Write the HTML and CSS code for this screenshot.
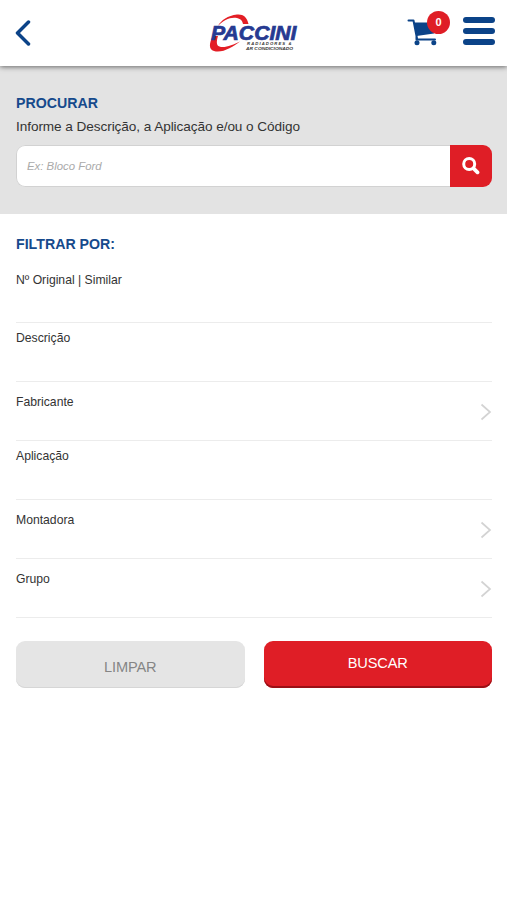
FILE: index.html
```html
<!DOCTYPE html>
<html lang="pt-BR">
<head>
<meta charset="utf-8">
<title>Paccini</title>
<link rel="stylesheet" href="styles.css">
</head>
<body>
<header class="topbar">
  <a class="back" aria-label="Voltar"><svg width="16" height="26" viewBox="0 0 16 26"><path d="M13.5 2 2.500 13l11 11" fill="none" stroke="#0b4388" stroke-width="3.500" stroke-linecap="round" stroke-linejoin="round"/></svg></a>
  <svg class="logo" width="110" height="60" viewBox="0 0 110 60">
    <path d="M48.500 19C47 12 43 9 37 9.600 28 10.500 21 15.500 18 21 23 15 31 11.500 37 13c4 1 5.500 3 6 6z" fill="#e31e25"/>
    <path d="M13 31c-4 7-4.500 13.500 1 15C22 48.500 33 42 40 36.500c-7 3.500-16 7-20.500 5C16 40.500 16.500 36 18 31z" fill="#e31e25"/>
    <text class="logo-name" x="11" y="35.300" textLength="85.500" lengthAdjust="spacingAndGlyphs">PACCINI</text>
    <text class="logo-sub" x="47" y="40" textLength="44.500" lengthAdjust="spacing">RADIADORES &amp;</text>
    <text class="logo-sub" x="46" y="44.900" textLength="47" lengthAdjust="spacingAndGlyphs">AR CONDICIONADO</text>
  </svg>
  <div class="actions">
    <a class="cart" aria-label="Carrinho">
      <svg width="31" height="28" viewBox="0 0 31 28">
        <path d="M7 4.500h22L27 15.500 9.500 18z" fill="#0b4388"/>
        <path d="M1.500 2.500h5L10 20.500M9.500 17v4.500H28" fill="none" stroke="#0b4388" stroke-width="2" stroke-linecap="round" stroke-linejoin="round"/>
        <circle cx="10" cy="24.800" r="2.500" fill="#0b4388"/><circle cx="26.800" cy="24.800" r="2.500" fill="#0b4388"/>
      </svg>
      <span class="badge">0</span>
    </a>
    <a class="menu" aria-label="Menu"><i></i><i></i><i></i></a>
  </div>
</header>
<section class="search">
  <h2>PROCURAR</h2>
  <p>Informe a Descrição, a Aplicação e/ou o Código</p>
  <div class="searchbox">
    <span class="field">Ex: Bloco Ford</span>
    <span class="go"><svg width="18" height="18" viewBox="0 0 18 18"><circle cx="7.200" cy="7" r="5.500" fill="none" stroke="#fff" stroke-width="3"/><path d="m11.500 11.300 4 4" stroke="#fff" stroke-width="3.800" stroke-linecap="round"/></svg></span>
  </div>
</section>
<main class="filters">
  <h2>FILTRAR POR:</h2>
  <div class="row first">Nº Original | Similar</div>
  <div class="row">Descrição</div>
  <div class="row select">Fabricante<svg width="12" height="18" viewBox="0 0 12 18"><path d="m1.500 1.500 8.500 7.500-8.500 7.500"/></svg></div>
  <div class="row">Aplicação</div>
  <div class="row select">Montadora<svg width="12" height="18" viewBox="0 0 12 18"><path d="m1.500 1.500 8.500 7.500-8.500 7.500"/></svg></div>
  <div class="row select">Grupo<svg width="12" height="18" viewBox="0 0 12 18"><path d="m1.500 1.500 8.500 7.500-8.500 7.500"/></svg></div>
  <div class="buttons">
    <span class="btn clear">LIMPAR</span>
    <span class="btn submit">BUSCAR</span>
  </div>
</main>
</body>
</html>
```
FILE: styles.css
```css
* { box-sizing: border-box; }
body { margin: 0; background: #fff; color: #333; font-family: "Liberation Sans", Arial, sans-serif; }
h2 { margin: 0; font-size: 14.200px; line-height: 18px; font-weight: 700; color: #164a8c; }
svg { display: block; }

.topbar { position: relative; display: grid; grid-template-columns: 200px 110px 1fr; height: 66px; background: #fff; box-shadow: 0 1px 5px rgba(0,0,0,.55); }
.back { padding: 20px 0 0 15px; }
.logo { margin-top: 5px; }
.logo-name { font-size: 19.800px; font-weight: 700; font-style: italic; fill: #263a91; stroke: #263a91; stroke-width: .7px; }
.logo-sub { font-size: 4.200px; font-weight: 700; font-style: italic; fill: #333; }
.actions { display: flex; justify-content: space-between; padding: 17px 12px 0 97px; }
.cart { position: relative; height: 28px; padding-top: 1px; }
.badge { position: absolute; left: 20px; top: -6px; width: 23px; height: 23px; border-radius: 50%; background: #df1e26; color: #fff; font-size: 11px; line-height: 23px; font-weight: 700; text-align: center; }
.menu { display: grid; gap: 5px; width: 32px; align-content: start; }
.menu i { height: 6px; border-radius: 3px; background: #0b4388; }

.search { height: 148px; padding: 28px 15px 0 16px; background: #e3e3e3; }
.search p { margin: 6px 0 9px; font-size: 13.600px; line-height: 18px; letter-spacing: -.07px; }
.searchbox { display: flex; height: 42px; border-radius: 9px; overflow: hidden; }
.field { flex: 1; padding-left: 10px; border: 1px solid #d2d2d2; border-right: 0; border-radius: 9px 0 0 9px; background: #fff; color: #aaa; font-size: 11.400px; line-height: 41px; font-style: italic; }
.go { display: grid; place-items: center; width: 42px; background: #df1e26; }

.filters { padding: 21px 15px 0 16px; }
.row { height: 59px; padding-top: 7px; border-bottom: 1px solid #ececec; font-size: 12.200px; line-height: 16px; }
.row.first { height: 70px; padding-top: 19px; }
.row.select { display: flex; justify-content: space-between; padding-top: 12px; }
.row.select svg { margin-top: 9px; fill: none; stroke: #d3d3d3; stroke-width: 1.700; }
.buttons { display: grid; grid-template-columns: 1fr 1fr; gap: 19px; margin-top: 23px; }
.btn { height: 47px; border-radius: 9px; font-size: 14.600px; line-height: 45px; text-align: center; letter-spacing: -.15px; }
.clear { padding-top: 4px; background: #e5e5e5; color: #858585; box-shadow: inset 0 -1px 0 #d6d6d6; }
.submit { background: #df1e26; color: #fff; box-shadow: inset 0 -2px 0 #9b1016; }
```
